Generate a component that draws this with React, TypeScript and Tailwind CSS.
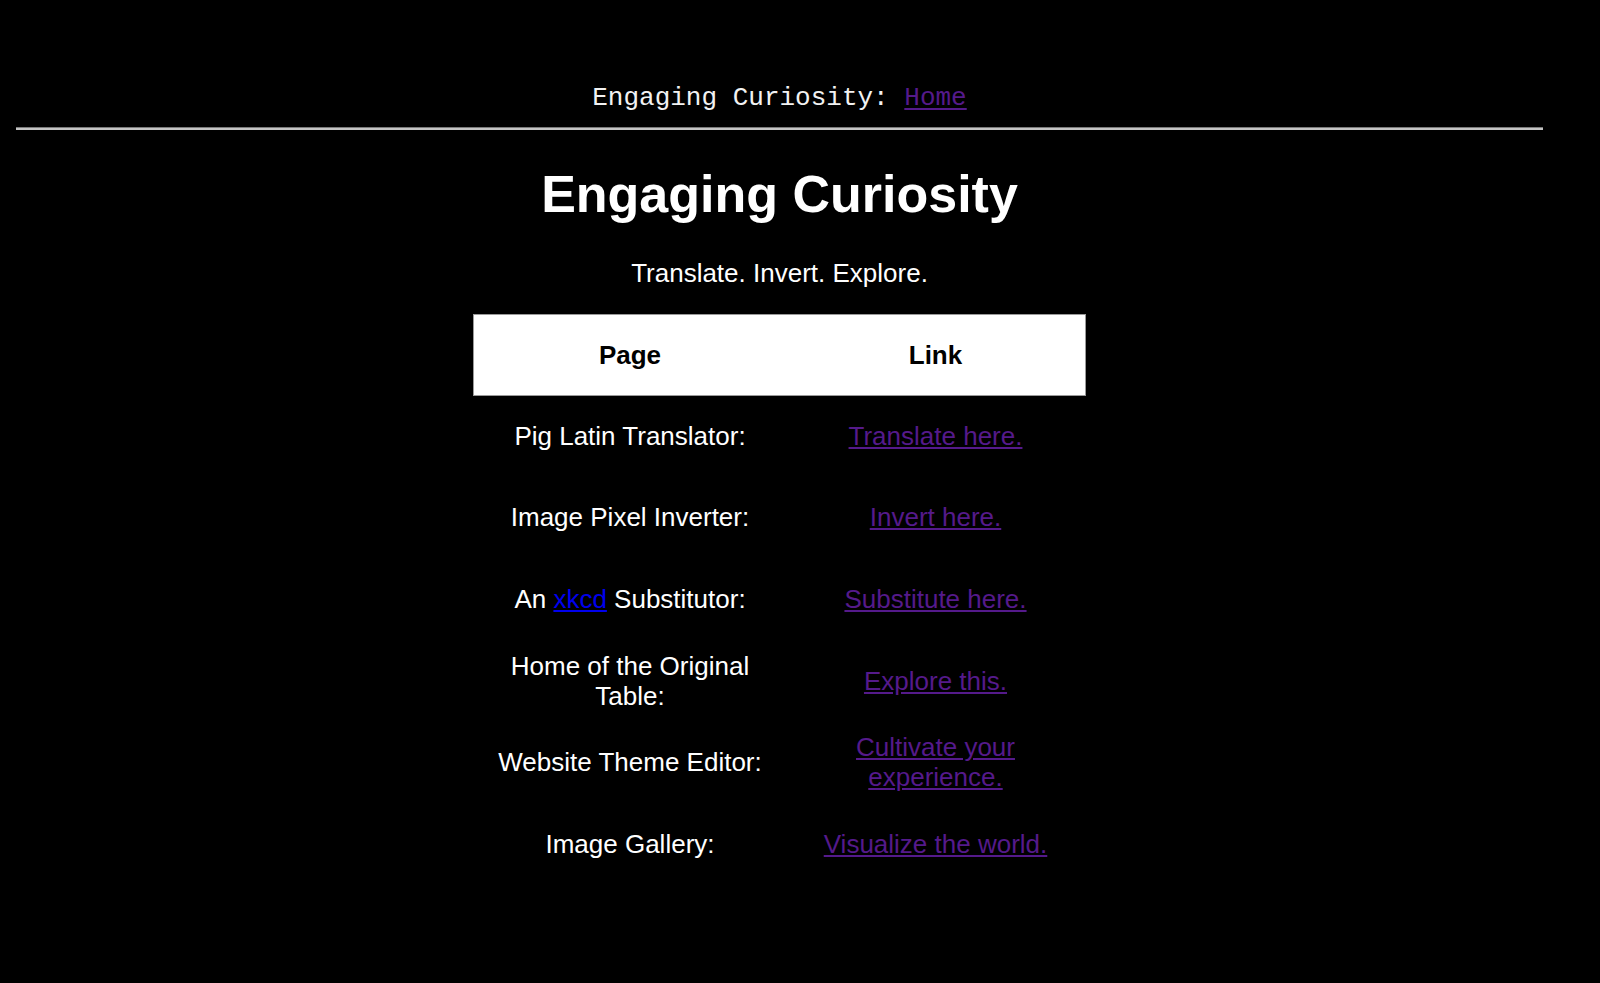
export default function App() {
  const rows = [
    { page: <>Pig Latin Translator:</>, link: "Translate here." },
    { page: <>Image Pixel Inverter:</>, link: "Invert here." },
    {
      page: (
        <>
          An <a href="#" className="text-[#0000ee] underline">xkcd</a> Substitutor:
        </>
      ),
      link: "Substitute here.",
    },
    { page: <>Home of the Original Table:</>, link: "Explore this." },
    { page: <>Website Theme Editor:</>, link: "Cultivate your experience." },
    { page: <>Image Gallery:</>, link: "Visualize the world." },
  ];

  return (
    <main className="min-h-screen bg-black text-white font-['Liberation_Sans',Arial,sans-serif]">
      <div className="ml-4 w-[1527px] pt-[83px] pb-10">
        {/* Top nav */}
        <div className="text-center font-['Liberation_Mono','Courier_New',monospace] text-[26px] leading-[30px] text-[#f2f2f2]">
          Engaging Curiosity:{" "}
          <a href="#" className="text-[#551a8b] underline underline-offset-[3px]">
            Home
          </a>
        </div>
        <div className="mt-[14px] h-[3px] border-t border-[#7a7a7a] bg-[#c4c4c4]" />

        <h1 className="mt-[34px] text-center text-[52px] font-bold leading-[60px]">Engaging Curiosity</h1>
        <p className="mt-[34px] text-center text-[26px] leading-[30px]">Translate. Invert. Explore.</p>

        <table className="mx-auto mt-[27px] w-[611px] border-collapse text-center text-[26px] leading-[30px]">
          <thead>
            <tr className="h-[80px] bg-white text-black outline outline-1 outline-[#9a9a9a]">
              <th className="w-[312px] px-5 font-bold">Page</th>
              <th className="w-[299px] px-6 font-bold">Link</th>
            </tr>
          </thead>
          <tbody>
            {rows.map((r, i) => (
              <tr key={i} className="h-[81.6px]">
                <td className="px-5 align-middle">{r.page}</td>
                <td className="px-6 align-middle">
                  <a href="#" className="text-[#551a8b] underline">
                    {r.link}
                  </a>
                </td>
              </tr>
            ))}
          </tbody>
        </table>
      </div>
    </main>
  );
}
